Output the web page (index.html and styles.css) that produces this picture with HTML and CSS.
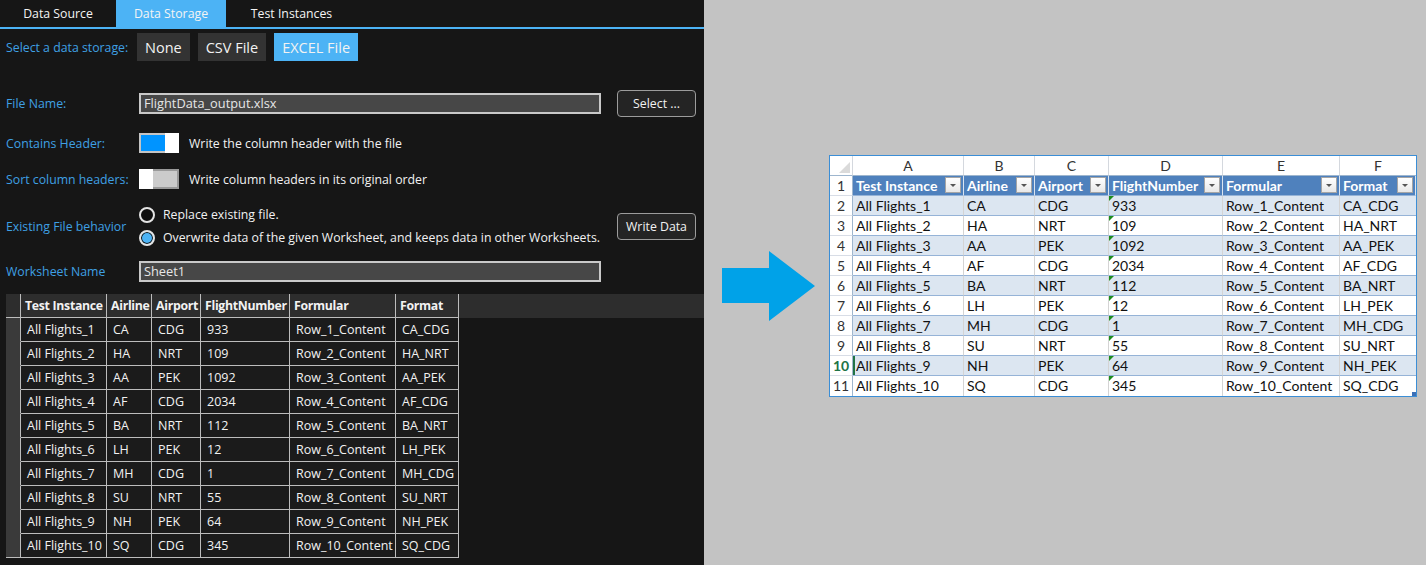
FILE: index.html
```html
<!DOCTYPE html>
<html>
<head>
<meta charset="utf-8">
<link rel="stylesheet" href="styles.css">
</head>
<body>
<div class="app">
  <section class="panel">
    <nav class="tabs">
      <div class="tab t1">Data Source</div>
      <div class="tab t2 active">Data Storage</div>
      <div class="tab t3">Test Instances</div>
    </nav>
    <div class="storage-row">
      <span class="label storage-label">Select a data storage:</span>
      <button class="opt">None</button>
      <button class="opt">CSV File</button>
      <button class="opt on">EXCEL File</button>
    </div>

    <div class="frow file-row">
      <span class="label">File Name:</span>
      <div class="input">FlightData_output.xlsx</div>
      <button class="btn">Select ...</button>
    </div>

    <div class="frow toggle-row r-header">
      <span class="label">Contains Header:</span>
      <div class="toggle tog-on"><span class="knob"></span></div>
      <span class="ttext">Write the column header with the file</span>
    </div>

    <div class="frow toggle-row r-sort">
      <span class="label">Sort column headers:</span>
      <div class="toggle tog-off"><span class="knob"></span></div>
      <span class="ttext">Write column headers in its original order</span>
    </div>

    <div class="frow exist-row">
      <span class="label">Existing File behavior</span>
      <div class="radios">
        <div class="radio-item"><span class="radio"></span><span>Replace existing file.</span></div>
        <div class="radio-item"><span class="radio checked"></span><span>Overwrite data of the given Worksheet, and keeps data in other Worksheets.</span></div>
      </div>
      <button class="btn">Write Data</button>
    </div>

    <div class="frow ws-row">
      <span class="label">Worksheet Name</span>
      <div class="input">Sheet1</div>
    </div>

    <div class="grid">
      <div class="grow ghead">
        <div class="c rh"></div>
        <div class="c w1">Test Instance</div>
        <div class="c w2">Airline</div>
        <div class="c w3">Airport</div>
        <div class="c w4">FlightNumber</div>
        <div class="c w5">Formular</div>
        <div class="c w6">Format</div>
      </div>
      <div class="grow"><div class="c rh"></div><div class="c w1">All Flights_1</div><div class="c w2">CA</div><div class="c w3">CDG</div><div class="c w4">933</div><div class="c w5">Row_1_Content</div><div class="c w6">CA_CDG</div></div>
      <div class="grow"><div class="c rh"></div><div class="c w1">All Flights_2</div><div class="c w2">HA</div><div class="c w3">NRT</div><div class="c w4">109</div><div class="c w5">Row_2_Content</div><div class="c w6">HA_NRT</div></div>
      <div class="grow"><div class="c rh"></div><div class="c w1">All Flights_3</div><div class="c w2">AA</div><div class="c w3">PEK</div><div class="c w4">1092</div><div class="c w5">Row_3_Content</div><div class="c w6">AA_PEK</div></div>
      <div class="grow"><div class="c rh"></div><div class="c w1">All Flights_4</div><div class="c w2">AF</div><div class="c w3">CDG</div><div class="c w4">2034</div><div class="c w5">Row_4_Content</div><div class="c w6">AF_CDG</div></div>
      <div class="grow"><div class="c rh"></div><div class="c w1">All Flights_5</div><div class="c w2">BA</div><div class="c w3">NRT</div><div class="c w4">112</div><div class="c w5">Row_5_Content</div><div class="c w6">BA_NRT</div></div>
      <div class="grow"><div class="c rh"></div><div class="c w1">All Flights_6</div><div class="c w2">LH</div><div class="c w3">PEK</div><div class="c w4">12</div><div class="c w5">Row_6_Content</div><div class="c w6">LH_PEK</div></div>
      <div class="grow"><div class="c rh"></div><div class="c w1">All Flights_7</div><div class="c w2">MH</div><div class="c w3">CDG</div><div class="c w4">1</div><div class="c w5">Row_7_Content</div><div class="c w6">MH_CDG</div></div>
      <div class="grow"><div class="c rh"></div><div class="c w1">All Flights_8</div><div class="c w2">SU</div><div class="c w3">NRT</div><div class="c w4">55</div><div class="c w5">Row_8_Content</div><div class="c w6">SU_NRT</div></div>
      <div class="grow"><div class="c rh"></div><div class="c w1">All Flights_9</div><div class="c w2">NH</div><div class="c w3">PEK</div><div class="c w4">64</div><div class="c w5">Row_9_Content</div><div class="c w6">NH_PEK</div></div>
      <div class="grow last"><div class="c rh"></div><div class="c w1">All Flights_10</div><div class="c w2">SQ</div><div class="c w3">CDG</div><div class="c w4">345</div><div class="c w5">Row_10_Content</div><div class="c w6">SQ_CDG</div></div>
    </div>
  </section>

  <section class="right">
    <svg class="arrow" width="93" height="70" viewBox="0 0 93 70"><polygon points="0,17 47,17 47,0 93,35 47,70 47,52 0,52" fill="#00a2e8"/></svg>

    <div class="xl">
      <div class="xrow xcols">
        <div class="xc xn corner"><span class="tri"></span></div>
        <div class="xc a">A</div><div class="xc b">B</div><div class="xc cc">C</div><div class="xc d">D</div><div class="xc e">E</div><div class="xc f">F</div>
      </div>
      <div class="xrow xhead">
        <div class="xc xn">1</div>
        <div class="xc a">Test Instance<span class="flt"></span></div>
        <div class="xc b">Airline<span class="flt"></span></div>
        <div class="xc cc">Airport<span class="flt"></span></div>
        <div class="xc d">FlightNumber<span class="flt"></span></div>
        <div class="xc e">Formular<span class="flt"></span></div>
        <div class="xc f">Format<span class="flt"></span></div>
      </div>
      <div class="xrow band"><div class="xc xn">2</div><div class="xc a">All Flights_1</div><div class="xc b">CA</div><div class="xc cc">CDG</div><div class="xc d num">933</div><div class="xc e">Row_1_Content</div><div class="xc f">CA_CDG</div></div>
      <div class="xrow"><div class="xc xn">3</div><div class="xc a">All Flights_2</div><div class="xc b">HA</div><div class="xc cc">NRT</div><div class="xc d num">109</div><div class="xc e">Row_2_Content</div><div class="xc f">HA_NRT</div></div>
      <div class="xrow band"><div class="xc xn">4</div><div class="xc a">All Flights_3</div><div class="xc b">AA</div><div class="xc cc">PEK</div><div class="xc d num">1092</div><div class="xc e">Row_3_Content</div><div class="xc f">AA_PEK</div></div>
      <div class="xrow"><div class="xc xn">5</div><div class="xc a">All Flights_4</div><div class="xc b">AF</div><div class="xc cc">CDG</div><div class="xc d num">2034</div><div class="xc e">Row_4_Content</div><div class="xc f">AF_CDG</div></div>
      <div class="xrow band"><div class="xc xn">6</div><div class="xc a">All Flights_5</div><div class="xc b">BA</div><div class="xc cc">NRT</div><div class="xc d num">112</div><div class="xc e">Row_5_Content</div><div class="xc f">BA_NRT</div></div>
      <div class="xrow"><div class="xc xn">7</div><div class="xc a">All Flights_6</div><div class="xc b">LH</div><div class="xc cc">PEK</div><div class="xc d num">12</div><div class="xc e">Row_6_Content</div><div class="xc f">LH_PEK</div></div>
      <div class="xrow band"><div class="xc xn">8</div><div class="xc a">All Flights_7</div><div class="xc b">MH</div><div class="xc cc">CDG</div><div class="xc d num">1</div><div class="xc e">Row_7_Content</div><div class="xc f">MH_CDG</div></div>
      <div class="xrow"><div class="xc xn">9</div><div class="xc a">All Flights_8</div><div class="xc b">SU</div><div class="xc cc">NRT</div><div class="xc d num">55</div><div class="xc e">Row_8_Content</div><div class="xc f">SU_NRT</div></div>
      <div class="xrow band sel"><div class="xc xn">10</div><div class="xc a">All Flights_9</div><div class="xc b">NH</div><div class="xc cc">PEK</div><div class="xc d num">64</div><div class="xc e">Row_9_Content</div><div class="xc f">NH_PEK</div></div>
      <div class="xrow xlast"><div class="xc xn">11</div><div class="xc a">All Flights_10</div><div class="xc b">SQ</div><div class="xc cc">CDG</div><div class="xc d num">345</div><div class="xc e">Row_10_Content</div><div class="xc f">SQ_CDG</div><span class="grip"></span></div>
    </div>
  </section>
</div>
</body>
</html>
```

FILE: styles.css
```css
* { box-sizing: border-box; }
html, body { margin: 0; padding: 0; }
body {
  width: 1426px;
  height: 565px;
  overflow: hidden;
  font-family: "Open Sans", "Noto Sans", sans-serif;
  font-size: 12.3px;
  color: #f2f2f2;
}
.app { display: flex; height: 565px; }

/* ---------- left panel ---------- */
.panel {
  width: 704px;
  height: 565px;
  background: #161616;
  display: flex;
  flex-direction: column;
}
.tabs {
  display: flex;
  height: 29px;
  border-bottom: 2px solid #4cb3f5;
}
.tab {
  height: 27px;
  line-height: 28px;
  text-align: center;
  color: #f4f4f4;
}
.t1 { width: 116px; }
.t2 { width: 110px; }
.t3 { width: 131px; }
.tab.active { background: #4cb3f5; }

.label { color: #3fa0e4; }

.storage-row {
  display: flex;
  align-items: center;
  margin-top: 4px;
  height: 28px;
  padding-left: 6px;
}
.storage-label { width: 131px; }
.opt {
  font-family: inherit;
  height: 28px;
  border: 0;
  background: #333333;
  color: #f2f2f2;
  font-size: 14.5px;
  padding: 0 8px;
  margin-right: 8px;
}
.opt.on { background: #4cb3f5; }

.frow {
  display: flex;
  align-items: center;
  padding-left: 6px;
}
.frow .label { width: 133px; flex: none; }
.file-row { margin-top: 29px; height: 27px; }
.input {
  width: 462px;
  height: 21px;
  background: #474747;
  border: 2px solid #c9c9c9;
  color: #e6e6e6;
  padding-left: 3px;
  line-height: 17px;
  font-size: 12.8px;
}
.btn {
  font-family: inherit;
  font-size: 12.3px;
  color: #f2f2f2;
  background: #242424;
  border: 1px solid #9c9c9c;
  border-radius: 4px;
  width: 79px;
  height: 27px;
  margin-left: 16px;
  padding: 0;
}
.toggle-row { height: 20px; }
.r-header { margin-top: 16px; }
.r-sort { margin-top: 16px; }
.toggle {
  width: 40px;
  height: 20px;
  display: flex;
  flex: none;
}
.tog-on {
  border: 2px solid #c4c4c4;
  background: #0094ff;
  justify-content: flex-end;
}
.tog-on .knob { width: 14px; margin: -2px -2px -2px 0; background: #ffffff; }
.tog-off {
  border: 2px solid #9a9a9a;
  background: #cbcbcb;
  justify-content: flex-start;
}
.tog-off .knob { width: 14px; margin: -2px 0 -2px -2px; background: #ffffff; }
.ttext { margin-left: 10px; color: #f2f2f2; }

.exist-row { margin-top: 14px; height: 46px; }
.radios { width: 462px; display: flex; flex-direction: column; }
.radio-item { display: flex; align-items: center; height: 23px; }
.radio {
  width: 16px;
  height: 16px;
  border-radius: 50%;
  border: 2px solid #e4e4e4;
  background: #0e0e0e;
  margin-right: 8px;
  flex: none;
}
.radio.checked {
  background: #4cb3f5;
  box-shadow: inset 0 0 0 1px #0e0e0e;
}
.ws-row { margin-top: 12px; height: 21px; }

/* grid */
.grid {
  margin-top: 12px;
  margin-left: 6px;
  width: 698px;
}
.grow { display: flex; height: 24px; }
.ghead { background: #2d2d2d; }
.c {
  height: 24px;
  line-height: 23px;
  padding-left: 6px;
  border-right: 1px solid #bdbdbd;
  border-bottom: 1px solid #bdbdbd;
  background: #1b1b1b;
  white-space: nowrap;
  overflow: hidden;
  font-size: 12.5px;
}
.ghead .c {
  background: #2d2d2d;
  font-weight: 700;
  font-size: 12.3px;
  letter-spacing: -0.3px;
  padding-left: 4px;
}
.c.rh { width: 15px; background: #3a3a3a; border-bottom-color: #3a3a3a; padding: 0; }
.ghead .c.rh { background: #2d2d2d; border-bottom-color: #bdbdbd; padding: 0; }
.grow.last .c.rh { border-bottom-color: #bdbdbd; }
.w1 { width: 86px; }
.w2 { width: 45px; }
.w3 { width: 49px; }
.w4 { width: 89px; }
.w5 { width: 106px; }
.w6 { width: 63px; }

/* ---------- right side ---------- */
.right {
  flex: 1;
  height: 565px;
  background: #c3c3c3;
  display: flex;
  align-items: flex-start;
  padding-left: 18px;
}
.arrow { margin-top: 251px; flex: none; display: block; }
.xl {
  margin-top: 155px;
  margin-left: 14px;
  border: 1px solid #3b8ed6;
  background: #ffffff;
  width: 588px;
  font-family: "Lato", "Liberation Sans", sans-serif;
  font-size: 14px;
  color: #111;
  position: relative;
}
.xrow { display: flex; height: 20px; }
.xc {
  height: 20px;
  line-height: 19px;
  padding-left: 3px;
  border-right: 1px solid #d4d4d4;
  border-bottom: 1px solid #95b3d7;
  white-space: nowrap;
  overflow: hidden;
  position: relative;
}
.xn {
  width: 23px;
  padding: 0;
  text-align: center;
  color: #333;
  border-right: 1px solid #9eb6ce;
  border-bottom: 1px solid #d8dde6;
  background: #ffffff;
}
.a { width: 111px; }
.b { width: 71px; }
.cc { width: 74px; }
.d { width: 114px; }
.e { width: 117px; }
.f { width: 97px; flex: 1; border-right: 0; }
.xcols .xc {
  text-align: center;
  padding: 0;
  color: #333;
  border-bottom: 1px solid #9eb6ce;
  border-right: 1px solid #d4d8de;
}
.xcols .f { border-right: 0; }
.corner .tri {
  position: absolute;
  right: 2px;
  bottom: 2px;
  width: 0; height: 0;
  border-left: 11px solid transparent;
  border-bottom: 11px solid #dadada;
}
.xhead .xc:not(.xn) {
  background: #4f81bd;
  color: #fff;
  font-weight: 700;
  border-right: 1px solid #dbe5f1;
  border-bottom: 1px solid #95b3d7;
}
.xhead .f { border-right: 0; }
.flt {
  position: absolute;
  right: 2px;
  top: 1px;
  width: 16px;
  height: 16px;
  background: linear-gradient(#ffffff, #e8e8e8);
  border: 1px solid #a5a5a5;
}
.flt::after {
  content: "";
  position: absolute;
  left: 4px;
  top: 6px;
  border-left: 3px solid transparent;
  border-right: 3px solid transparent;
  border-top: 3px solid #555;
}
.band .xc:not(.xn) { background: #dce6f1; }
.num::before {
  content: "";
  position: absolute;
  left: 0;
  top: 0;
  border-top: 5px solid #1e8c1e;
  border-right: 5px solid transparent;
}
.sel .xn { color: #217346; font-weight: 700; }
.sel .a { box-shadow: inset 2px 0 0 #217346; }
.xlast .xc { border-bottom: 0; }
.xlast .xn { border-bottom: 0; }
.grip {
  position: absolute;
  right: 0;
  bottom: 0;
  width: 4px;
  height: 4px;
  background: #3b6fb6;
}
```
